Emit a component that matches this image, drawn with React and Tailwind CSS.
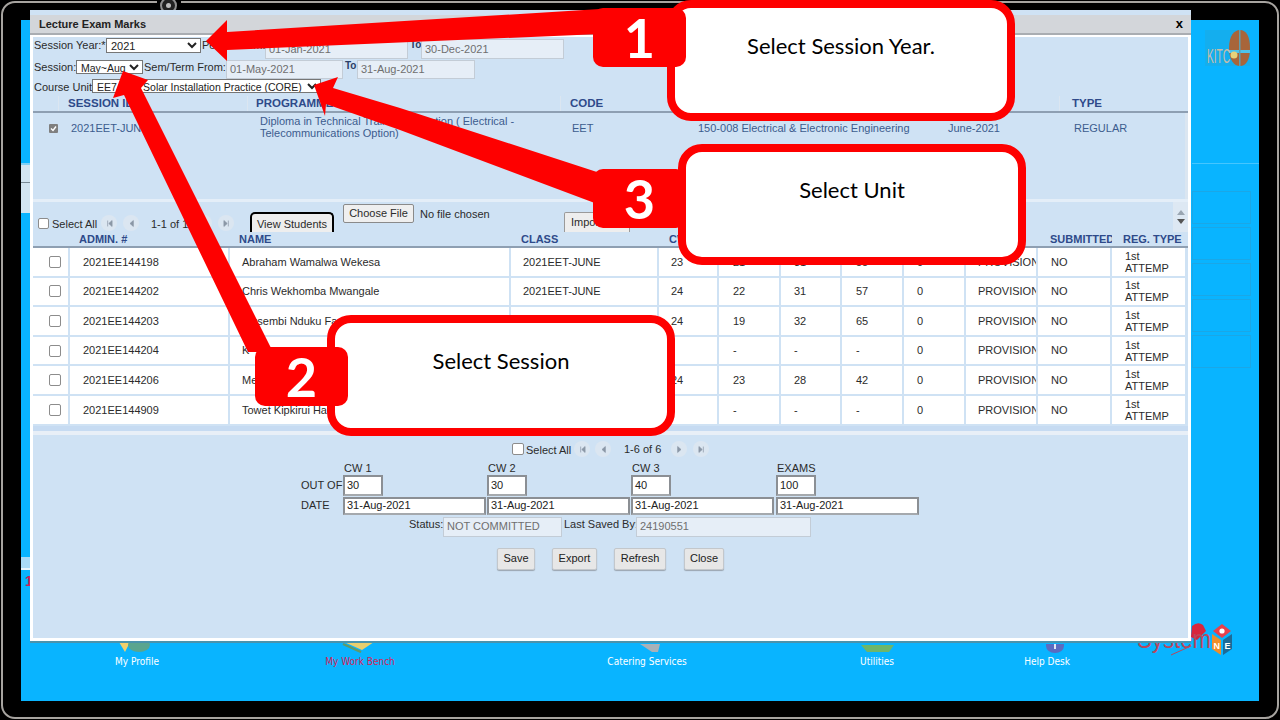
import React from "react";

const mainCols = "grid-cols-[37px_160px_281px_148px_60px_62px_61px_62px_62px_72px_74px_76px]";
const heads = [["", ""], ["ADMIN. #", "pl-[9px]"], ["NAME", "pl-[9px]"], ["CLASS", "pl-[10px]"], ["CW 1", "pl-[10px]"], ["CW 2", "pl-[11px]"], ["CW 3", "pl-[11px]"], ["EXAM", "pl-[11px]"], ["TOTAL", "pl-[11px]"], ["STATUS", "pl-[11px]"], ["SUBMITTED", "pl-[12px]"], ["REG. TYPE", "pl-[11px]"]];
const rows = [
  ["2021EE144198", "Abraham Wamalwa Wekesa", "2021EET-JUNE", "23", "21", "31", "55", "0"],
  ["2021EE144202", "Chris Wekhomba Mwangale", "2021EET-JUNE", "24", "22", "31", "57", "0"],
  ["2021EE144203", "Musembi Nduku Fa", "", "24", "19", "32", "65", "0"],
  ["2021EE144204", "K", "", "", "-", "-", "-", "0"],
  ["2021EE144206", "Me", "", "24", "23", "28", "42", "0"],
  ["2021EE144909", "Towet Kipkirui Ha", "", "", "-", "-", "-", "0"],
];

function Nav({ kind }) {
  const d = { first: "M5 3v8M11 3L6.5 7l4.5 4z", prev: "M10 3L5.5 7l4.5 4z", next: "M5 3l4.5 4L5 11z", last: "M10 3v8M4 3l4.5 4L4 11z" }[kind];
  return (
    <span className="flex h-[16px] w-[16px] shrink-0 items-center justify-center rounded-full bg-[#dbe6f1]">
      <svg viewBox="0 0 15 14" className="h-[11px] w-[11px]" fill="#8a97a6" stroke="#8a97a6" strokeWidth="1"><path d={d} /></svg>
    </span>
  );
}

function Check({ className = "" }) {
  return <span className={"block h-[11px] w-[11px] rounded-[2px] border border-[#8c8c8c] bg-white " + className} />;
}

function Ro({ className, children }) {
  return <div className={"flex items-center whitespace-nowrap border border-[#c3ccd6] bg-[#e6eef7] pl-[3px] text-[11px] text-[#6f6f6f] " + className}>{children}</div>;
}

function Field({ className, children }) {
  return <div className={"flex items-center border-2 border-[#8b8f94] border-b-[#a5a9ad] bg-white pl-[2px] text-[11px] text-[#222] " + className}>{children}</div>;
}

function Btn({ children, className }) {
  return <div className={"flex h-[22px] items-center justify-center rounded-[2px] border border-[#c3c7cb] bg-[#e7e7e7] text-[11px] text-[#222] shadow-[0_1px_1px_#9aa5b0] " + className}>{children}</div>;
}

function Tool({ label, className = "", icon, iconClass = "" }) {
  return (
    <div className={"flex flex-col items-center " + className}>
      <div className={"flex h-[26px] items-end pb-[2px] " + iconClass}>{icon}</div>
      <span className="whitespace-nowrap font-['DejaVu_Sans_Condensed','Liberation_Sans',sans-serif] text-[10px] leading-[14px]">{label}</span>
    </div>
  );
}

function Callout({ className, children }) {
  return (
    <div className={"absolute flex h-[121px] w-[348px] justify-center rounded-[24px] border-[8px] border-[#fe0000] bg-white font-['Lato',sans-serif] text-[22px] leading-[26px] text-black " + className}>
      {children}
    </div>
  );
}

function Badge({ className, children }) {
  return (
    <div className={"absolute flex h-[59px] w-[93px] items-center justify-center rounded-[10px] bg-[#fe0000] font-['Lato',sans-serif] text-[54px] font-bold text-white " + className}>
      {children}
    </div>
  );
}

export default function App() {
  return (
    <div className="relative h-[720px] w-[1280px] overflow-hidden bg-black font-['Liberation_Sans',Arial,sans-serif]">
      {/* device bezel */}
      <div className="absolute inset-x-[1px] bottom-[1px] top-[1px] rounded-[14px] border-[2px] border-[#a7a4a0]" />
      <div className="absolute left-[157px] top-0 h-[12px] w-[24px] bg-black" />
      <div className="absolute left-[160px] top-[-3px] flex h-[17px] w-[17px] items-center justify-center rounded-full border-2 border-[#8f8f8f] bg-[#222]">
        <span className="h-[5px] w-[5px] rounded-full bg-[#bdbdbd]" />
      </div>

      {/* desktop behind the window */}
      <div className="relative ml-[21px] mt-[20px] flex h-[681px] w-[1238px] flex-col bg-[#09b4ff]">
        <div className="flex h-[143px] justify-end">
          <svg viewBox="0 0 46 36" className="mr-[9px] mt-[10px] h-[36px] w-[46px]">
            <rect x="1" y="0" width="45" height="36" fill="#14aeee" />
            <path d="M25 18C25 6 30 0 36 0s10 6 10 18-4 18-10 18-11-6-11-18z" fill="#a8653a" />
            <rect x="25" y="20" width="21" height="3" fill="#4cc4ec" />
            <rect x="35" y="0" width="1.5" height="36" fill="#5f9fb0" />
            <circle cx="30" cy="25" r="3.5" fill="#e8d27a" />
            <text x="3" y="33" fontSize="20" textLength="23" lengthAdjust="spacingAndGlyphs" fill="#c9bda8" fontFamily="Liberation Sans">KITC</text>
          </svg>
        </div>
        <div className="ml-[1171px] flex flex-1 flex-col gap-[3px] border-t border-[#45c6ff] pr-[8px] pt-[27px]">
          <div className="h-[33px] border border-[#1ba7e6]" />
          <div className="h-[33px] border border-[#1ba7e6]" />
          <div className="h-[33px] border border-[#1ba7e6]" />
          <div className="h-[33px] border border-[#1ba7e6]" />
          <div className="h-[33px] border border-[#1ba7e6]" />
          <div className="flex-1" />
        </div>
        <div className="grid h-[72px] shrink-0 grid-cols-[232px_214px_360px_100px_240px] text-white">
          <Tool label="My Profile" iconClass="mr-[4px]" icon={<svg width="32" height="11"><path d="M0 0h11l-5 10z" fill="#f2d06b" /><ellipse cx="20" cy="3" rx="11" ry="7" fill="#5aa58f" /></svg>} />
          <Tool label="My Work Bench" className="text-[#d21f5a]" iconClass="mr-[4px]" icon={<svg width="32" height="11"><path d="M2 0h30l-12 8z" fill="#e8cf6e" /><path d="M1 2l18 8" stroke="#5f9a6a" strokeWidth="2.4" /></svg>} />
          <Tool label="Catering Services" iconClass="ml-[6px]" icon={<svg width="20" height="9"><path d="M0 0h20l-2 8h-6z" fill="#a9b1b8" /></svg>} />
          <Tool label="Utilities" icon={<svg width="33" height="8"><path d="M0 0h33l-5 7H6z" fill="#6eb56a" /></svg>} />
          <Tool label="Help Desk" iconClass="ml-[16px]" icon={<svg width="18" height="9"><path d="M0 0h18v2a9 7 0 0 1-18 0z" fill="#5b6bc0" /><rect x="8" y="0" width="2" height="5" fill="#dfe6f5" /></svg>} />
        </div>
        <div className="absolute left-[1116px] top-[603px] h-[52px] w-[96px]">
          <svg viewBox="0 0 96 52" className="h-full w-full">
            <path d="M55 3q6-5 11-1l3 6-9 9-6-3z" fill="#d7263d" />
            <text x="0" y="25" fontSize="26" textLength="74" lengthAdjust="spacingAndGlyphs" fill="#b9475c" fontFamily="Liberation Sans">System</text>
            <path d="M34 32l20-9" stroke="#b9475c" strokeWidth="1" />
            <path d="M85 1l9 7-9 7-9-7z" fill="#e8414b" />
            <circle cx="85" cy="8" r="2.6" fill="#fff" />
            <path d="M75 11l9 6v15l-9-6z" fill="#ef8e2a" />
            <path d="M95 11l-9 6v15l9-6z" fill="#1e6a96" />
            <text x="76.5" y="26" fontSize="9" fontWeight="bold" fill="#fff" fontFamily="Liberation Sans">N</text>
            <text x="87.5" y="26" fontSize="9" fontWeight="bold" fill="#fff" fontFamily="Liberation Sans">E</text>
          </svg>
        </div>
        <span className="absolute left-[4px] top-[553px] text-[14px] font-bold leading-[16px] text-[#d21f5a]">1</span>
      </div>

      {/* left strip pieces: side menu peeking out from behind the dialog */}
      <div className="absolute left-[21px] top-[163px] h-[50px] w-[9px] border-t-2 border-[#7fd0f5] bg-[#d3e5f1]">
        <div className="mt-[17px] h-px bg-[#7a8a95]" />
      </div>
      <div className="absolute left-[21px] top-[557px] h-[13px] w-[9px] border-b-2 border-[#e8f4fb] bg-[#a9daf6]" />

      {/* the dialog */}
      <div className="absolute left-[30px] top-[10px] flex h-[633px] w-[1161px] flex-col border-b-2 border-[#4a93ad] bg-[#cfe2f4] pt-[5px] text-[11px]">
        <div className="flex h-[20px] shrink-0 items-center justify-between border-b-2 border-[#a9adb2] bg-[#d3d6da] pl-[9px] pr-[8px] text-[11px] font-bold text-[#222]">
          <span>Lecture Exam Marks</span>
          <span className="text-[13px] text-black">x</span>
        </div>
        <div className="flex min-h-0 flex-1 flex-col whitespace-nowrap border-x-[3px] border-b-[3px] border-t-2 border-white bg-[#cfe2f4] text-[11px] text-[#2b2b2b]">
          {/* filters */}
          <div className="flex h-[21px] shrink-0 items-start pl-[1px]">
            <span className="mt-[1px] w-[72px] leading-[14px]">Session Year:*</span>
            <select defaultValue="2021" className="mt-[1px] h-[15px] w-[95px] border border-[#767676] bg-white text-[11px] leading-[12px] text-[#222]"><option>2021</option></select>
            <span className="mt-[1px] w-[64px] pl-[1px] leading-[14px]">Period From:</span>
            <Ro className="mt-[2px] h-[20px] w-[143px]">01-Jan-2021</Ro>
            <span className="mt-[1px] w-[13px] pl-[2px] text-[10px] font-bold leading-[14px] text-[#2b3f66]">To</span>
            <Ro className="mt-[2px] h-[20px] w-[143px]">30-Dec-2021</Ro>
          </div>
          <div className="flex h-[21px] shrink-0 items-start pl-[1px]">
            <span className="mt-[2px] w-[42px] leading-[14px]">Session:</span>
            <select defaultValue="May~Aug" className="mt-[2px] h-[14px] w-[67px] border border-[#767676] bg-white text-[10.5px] leading-[12px] text-[#222]"><option>May~Aug</option></select>
            <span className="mt-[2px] w-[83px] pl-[1px] leading-[14px]">Sem/Term From:</span>
            <Ro className="mt-[2px] h-[19px] w-[117px]">01-May-2021</Ro>
            <span className="mt-[1px] w-[14px] pl-[2px] text-[10px] font-bold leading-[14px] text-[#2b3f66]">To</span>
            <Ro className="mt-[2px] h-[19px] w-[118px]">31-Aug-2021</Ro>
          </div>
          <div className="flex h-[17px] shrink-0 items-start pl-[1px]">
            <span className="mt-[1px] w-[58px] leading-[14px]">Course Unit</span>
            <select defaultValue="u" className="h-[14px] w-[229px] border border-[#767676] bg-white text-[10.5px] leading-[12px] text-[#222]"><option value="u">{"EE7\u00a0\u00a0\u00a0\u00a0\u00a0\u00a0\u00a0\u00a0\u00a0Solar Installation Practice (CORE)"}</option></select>
          </div>

          {/* session table */}
          <div className="grid h-[17px] shrink-0 grid-cols-[25px_189px_313px_125px_250px_124px_1fr] border-b-[2px] border-[#8e9fb2] text-[11.5px] font-bold leading-[14px] text-[#2e4a8a]">
            <span />
            <span className="border-l border-[#dbe6f1] pl-[9px]">SESSION ID</span>
            <span className="border-l border-[#dbe6f1] pl-[8px]">PROGRAMME</span>
            <span className="border-l border-[#dbe6f1] pl-[9px]">CODE</span>
            <span /><span />
            <span className="border-l border-[#dbe6f1] pl-[12px]">TYPE</span>
          </div>
          <div className="grid h-[86px] shrink-0 grid-cols-[25px_189px_313px_125px_250px_124px_1fr] border-r-[3px] border-[#dbe6f1] text-[#3c5c8e]">
            <div className="pl-[16px] pt-[11px]">
              <svg viewBox="0 0 9 9" className="h-[9px] w-[9px]"><rect width="9" height="9" rx="1" fill="#7f7f7f" /><path d="M2 4.5l2 2 3-4" stroke="#fff" strokeWidth="1.4" fill="none" /></svg>
            </div>
            <div className="pl-[13px] pt-[8px] leading-[14px]">2021EET-JUNE</div>
            <div className="w-[270px] whitespace-normal pl-[13px] pt-[2px] leading-[12px]">Diploma in Technical Training Institution ( Electrical - Telecommunications Option)</div>
            <div className="pl-[12px] pt-[8px] leading-[14px]">EET</div>
            <div className="pl-[13px] pt-[8px] leading-[14px]">150-008 Electrical &amp; Electronic Engineering</div>
            <div className="pl-[13px] pt-[8px] leading-[14px]">June-2021</div>
            <div className="pl-[15px] pt-[8px] leading-[14px]">REGULAR</div>
          </div>
          <div className="h-[3px] shrink-0 bg-[#e4eef8]" />

          {/* toolbar */}
          <div className="flex h-[30px] shrink-0 items-end">
            <Check className="mb-[3px] ml-[5px]" />
            <span className="mb-[1px] ml-[3px] w-[49px] leading-[14px]">Select All</span>
            <div className="mb-[1px] flex items-center gap-[6px]"><Nav kind="first" /><Nav kind="prev" /></div>
            <span className="mb-[1px] ml-[12px] w-[45px] leading-[14px]">1-1 of 1</span>
            <div className="mb-[1px] flex items-center gap-[6px]"><Nav kind="next" /><Nav kind="last" /></div>
            <div className="ml-[16px] flex h-[20px] w-[84px] items-center justify-center rounded-t-[5px] border-x-2 border-t-2 border-black bg-[#eeeeee] pt-[2px]">View Students</div>
            <div className="mb-[9px] ml-[9px] flex h-[19px] w-[71px] items-center justify-center rounded-[2px] border border-[#8a8a8a] bg-[#efefef]">Choose File</div>
            <span className="mb-[11px] ml-[6px] w-[144px] leading-[14px]">No file chosen</span>
            <div className="flex h-[20px] w-[66px] items-center rounded-t-[2px] border border-b-0 border-[#9a9a9a] bg-[#eeeeee] pl-[6px]">Import</div>
            <div className="flex-1" />
            <div className="flex h-[30px] w-[15px] flex-col items-center justify-center gap-[4px] bg-[#dde8f3]">
              <span className="h-0 w-0 border-x-[4px] border-b-[5px] border-x-transparent border-b-[#9aa6b2]" />
              <span className="h-0 w-0 border-x-[4px] border-t-[5px] border-x-transparent border-t-[#555]" />
            </div>
          </div>

          {/* marks table */}
          <div className={"grid h-[16px] shrink-0 border-b-[2px] border-[#8e9fb2] font-bold leading-[14px] text-[#2e4a8a] " + mainCols}>
            {heads.map(([h, p], i) => (
              <span key={i} className={"overflow-hidden " + p}>{h}</span>
            ))}
          </div>
          {rows.map((r) => (
            <div key={r[0]} className={"grid h-[29.6px] shrink-0 border-b-2 border-[#cfe2f4] bg-white text-[#2b2b2b] " + mainCols}>
              <div className="flex items-center justify-center border-r-2 border-[#cfe2f4] pl-[8px]"><Check className="h-[12px] w-[12px]" /></div>
              <div className="flex items-center border-r-2 border-[#cfe2f4] pl-[13px]">{r[0]}</div>
              <div className="flex items-center border-r-2 border-[#cfe2f4] pl-[12px]">{r[1]}</div>
              <div className="flex items-center border-r-2 border-[#cfe2f4] pl-[12px]">{r[2]}</div>
              <div className="flex items-center border-r-2 border-[#cfe2f4] pl-[12px]">{r[3]}</div>
              <div className="flex items-center border-r-2 border-[#cfe2f4] pl-[14px]">{r[4]}</div>
              <div className="flex items-center border-r-2 border-[#cfe2f4] pl-[13px]">{r[5]}</div>
              <div className="flex items-center border-r-2 border-[#cfe2f4] pl-[14px]">{r[6]}</div>
              <div className="flex items-center border-r-2 border-[#cfe2f4] pl-[13px]">{r[7]}</div>
              <div className="flex items-center overflow-hidden border-r-2 border-[#cfe2f4] pl-[12px]">PROVISIONAL</div>
              <div className="flex items-center border-r-2 border-[#cfe2f4] pl-[13px]">NO</div>
              <div className="flex items-center overflow-hidden border-r-[3px] border-[#cfe2f4] pl-[13px] leading-[12px]"><span>1st<br />ATTEMP</span></div>
            </div>
          ))}
          <div className="h-[5px] shrink-0 bg-[#c6dbf2]" />
          <div className="h-[4px] shrink-0 bg-[#e8eff7]" />

          {/* pagination */}
          <div className="flex h-[27px] shrink-0 items-center pl-[479px] pt-[2px]">
            <Check className="h-[12px] w-[12px]" />
            <span className="ml-[2px] mt-[2px] w-[48px]">Select All</span>
            <div className="flex gap-[5px]"><Nav kind="first" /><Nav kind="prev" /></div>
            <span className="ml-[13px] w-[47px]">1-6 of 6</span>
            <div className="flex gap-[6px]"><Nav kind="next" /><Nav kind="last" /></div>
          </div>

          {/* limits */}
          <div className="grid shrink-0 grid-cols-[43px_144px_144px_145px_144px] pl-[267px] leading-[13px]">
            <span />
            <span className="pl-[1px]">CW 1</span>
            <span className="pl-[1px]">CW 2</span>
            <span className="pl-[1px]">CW 3</span>
            <span className="pl-[1px]">EXAMS</span>
            <span className="self-center pl-[1px]">OUT OF</span>
            <Field className="h-[21px] w-[40px]">30</Field>
            <Field className="h-[21px] w-[40px]">30</Field>
            <Field className="h-[21px] w-[40px]">40</Field>
            <Field className="h-[21px] w-[40px]">100</Field>
            <span className="mt-[1px] self-center pl-[1px]">DATE</span>
            <Field className="mt-[1px] h-[18px] w-[143px]">31-Aug-2021</Field>
            <Field className="mt-[1px] h-[18px] w-[143px]">31-Aug-2021</Field>
            <Field className="mt-[1px] h-[18px] w-[143px]">31-Aug-2021</Field>
            <Field className="mt-[1px] h-[18px] w-[143px]">31-Aug-2021</Field>
          </div>
          <div className="mt-[2px] flex h-[20px] shrink-0 items-start pl-[376px]">
            <span className="w-[34px] leading-[14px]">Status:</span>
            <Ro className="h-[20px] w-[119px]">NOT COMMITTED</Ro>
            <span className="w-[74px] pl-[2px] leading-[14px]">Last Saved By:</span>
            <Ro className="h-[20px] w-[175px]">24190551</Ro>
          </div>
          <div className="mt-[11px] flex shrink-0 pl-[464px]">
            <Btn className="w-[38px]">Save</Btn>
            <Btn className="ml-[17px] w-[45px]">Export</Btn>
            <Btn className="ml-[17px] w-[52px]">Refresh</Btn>
            <Btn className="ml-[18px] w-[40px]">Close</Btn>
          </div>
        </div>
      </div>

      {/* tutorial arrows */}
      <svg viewBox="0 0 1280 720" className="pointer-events-none absolute inset-0 h-[720px] w-[1280px]">
        <polygon points="600,9 227,32 227,20 206,41 227,61 227,50 600,34" fill="#fe0000" />
        <polygon points="123,71 113,98 124,95 248,352 273,352 141,88 148,80" fill="#fe0000" />
        <polygon points="314,85 338,77 333,88 400,108 600,173 600,205 400,130 326,104 325,116" fill="#fe0000" />
      </svg>

      {/* tutorial callouts */}
      <Callout className="left-[667px] top-0 pt-[25px]">Select Session Year.</Callout>
      <Callout className="left-[678px] top-[144px] pt-[25px]">Select Unit</Callout>
      <Callout className="left-[327px] top-[315px] pt-[25px]">Select Session</Callout>
      <Badge className="left-[593px] top-[8px]">1</Badge>
      <Badge className="left-[593px] top-[169px]">3</Badge>
      <Badge className="left-[255px] top-[347px]">2</Badge>
    </div>
  );
}
